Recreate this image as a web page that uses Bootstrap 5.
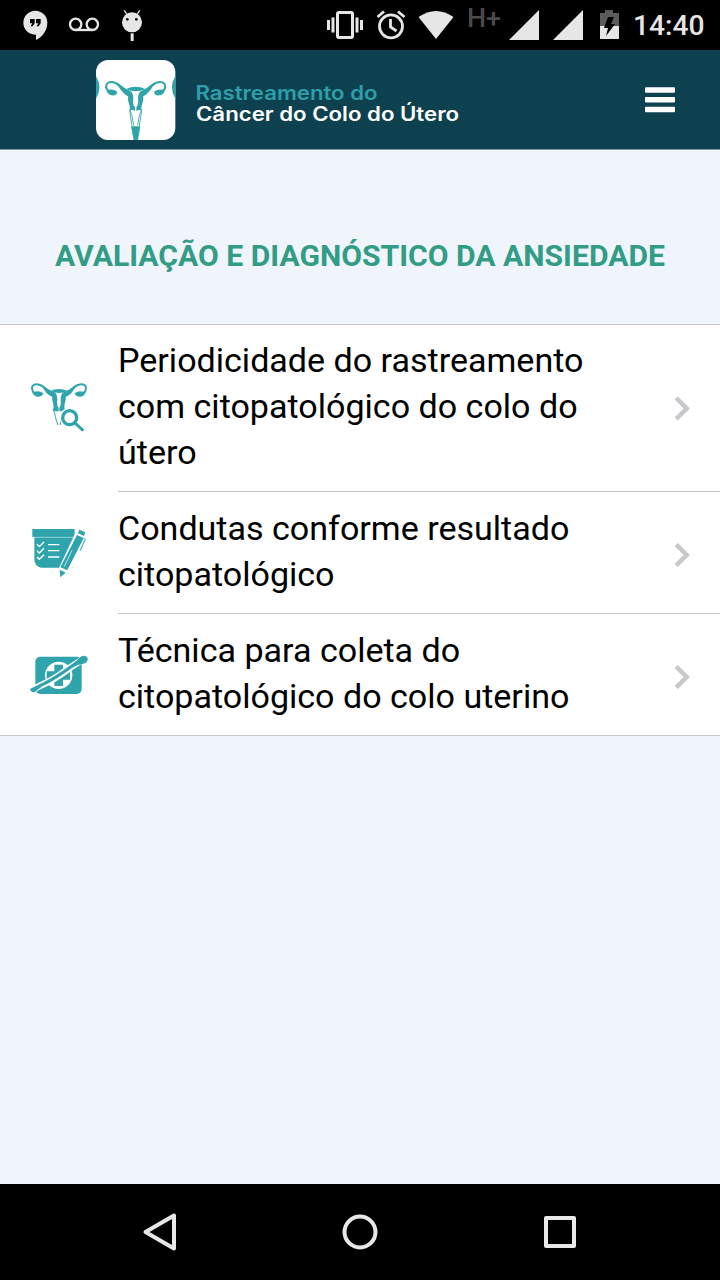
<!DOCTYPE html>
<html lang="pt-BR">
<head>
<meta charset="utf-8">
<meta name="viewport" content="width=device-width, initial-scale=1">
<title>Rastreamento do Câncer do Colo do Útero</title>
<link href="https://cdn.jsdelivr.net/npm/bootstrap@5.3.0/dist/css/bootstrap.min.css" rel="stylesheet">
<style>
body{font-family:Roboto,"Liberation Sans",sans-serif;background:#eff4fd;color:#000;height:1280px;overflow:hidden}
svg{display:block;flex:none}
.status-bar{height:50px;background:#000;color:#e6e6e6}
.clock{font-size:28.2px;line-height:50px;width:71px;margin-right:16px;padding-top:1px;white-space:nowrap;font-weight:500}
.app-bar{height:100px;background:#0d414f;border-bottom:1px solid #7f9ba8;padding:10px 45px 0 96px}
.screen-title{height:174px;padding-top:84px;font-size:30.15px;line-height:44px;font-weight:700;color:#329c85;white-space:nowrap}
.topics{border-top:1px solid #c4c7cc;border-bottom:1px solid #c4c7cc;border-radius:0;background:#fff}
.topic{padding:0 0 0 20px;border:0;background:#fff;color:#000;font-size:34.05px;line-height:46px}
.topic-body{margin-left:18px;height:122px;border-bottom:1px solid #c4c7cc;padding:0 28px 0 0}
.topic-body.tall{height:167px}
.topic:last-child .topic-body{border-bottom:0;height:121px}
.label-text{width:500px;white-space:nowrap;padding-bottom:3px}
.tall .label-text{padding-bottom:4px}
.nav-keys{height:96px;background:#000}
</style>
</head>
<body class="d-flex flex-column">
<div class="status-bar d-flex justify-content-between flex-shrink-0">
  <svg width="180" height="50" viewBox="0 0 540 150" fill="#e6e6e6">
    <path d="M106 32a36 36 0 0 0-36 36c0 20 16 36 38 36v16c18-9 34-28 34-52a36 36 0 0 0-36-36z"/>
    <path fill="#000" d="M90 57h14v13l-6 9h-6l5-9h-7zM108 57h14v13l-6 9h-6l5-9h-7z"/>
    <g fill="none" stroke="#e6e6e6" stroke-width="7"><circle cx="227" cy="73" r="17"/><circle cx="277" cy="73" r="17"/><path d="M227 90h50"/><path d="M373 31l9 14M419 31l-9 14" stroke-width="4"/></g>
    <circle cx="396" cy="67" r="30"/><rect x="392" y="100" width="9" height="23"/>
    <g fill="#000"><circle cx="382" cy="58" r="4"/><circle cx="409" cy="58" r="4"/></g>
  </svg>
  <div class="d-flex">
    <svg width="313" height="50" viewBox="320 0 313 50" fill="#e6e6e6">
      <rect x="337.500" y="12.500" width="15" height="25" rx="1.500" fill="none" stroke="#e6e6e6" stroke-width="3"/>
      <path d="M327 20h3v10h-3zM331.500 17.500h3v15h-3zM355.500 17.500h3v15h-3zM360 20h3v10h-3z"/>
      <g fill="none" stroke="#e6e6e6" stroke-width="2.800"><circle cx="391" cy="26.300" r="11.500"/><path d="M390.500 19v8l6 4M377.500 17l6.500-5.500M404.500 17l-6.500-5.500"/></g>
      <path d="M418.500 17Q436 5 453.500 17L436 39z"/>
      <text x="467" y="27" font-size="25" font-weight="500" fill="#4a4a4a" textLength="34" lengthAdjust="spacingAndGlyphs">H+</text>
      <path d="M509 40l30-30v30zM553 40l30-30v30z"/>
      <path fill="#5b5b5b" d="M600 13h5v-3h8v3h6v13h-19z"/><path d="M600 26h19v13h-19z"/>
      <path fill="#000" d="M608 17h6l-3 7h4l-9 12 2-8h-4z"/>
    </svg>
    <div class="clock">14:40</div>
  </div>
</div>

<header class="app-bar d-flex justify-content-between flex-shrink-0">
  <div class="d-flex">
    <svg width="80" height="80" viewBox="33 30 240 240">
      <rect x="33" y="30" width="238" height="240" rx="36" fill="#fff"/>
      <g fill="#2fa4a9">
        <path d="M33 78Q54 112 33 146zM271 78Q250 112 271 146z"/>
        <path d="M123 117Q152 103 181 117Q152 131 123 117z"/>
        <path d="M138 229h28l-7 41h-13z"/>
        <g id="tube">
          <path d="M65 118C56 92 86 91 101 106C112 116 122 123 136 128" fill="none" stroke="#2fa4a9" stroke-width="6"/>
          <path d="M96 97Q118 116 139 125C152 140 137 158 150 172V183L141 179L133 184C139 164 125 154 130 140C118 132 104 122 96 97z"/>
          <path d="M63 113L72 119Q86 117 97 125Q95 138 81 136Q65 135 63 113z"/>
        </g>
        <use href="#tube" transform="matrix(-1 0 0 1 304 0)"/>
      </g>
      <path d="M134 180C143 194 142 208 146 226M170 180C161 194 162 208 158 226M134 182L141 228M170 182L163 228" fill="none" stroke="#2fa4a9" stroke-width="2.500"/>
    </svg>
    <svg class="ms-3" width="280" height="80" viewBox="191 60 280 80" font-family="Inter,sans-serif" font-weight="600" font-size="19.500">
      <text x="194.500" y="99.500" fill="#2d9faa" textLength="182" lengthAdjust="spacingAndGlyphs">Rastreamento do</text>
      <text x="195" y="120.500" fill="#fff" textLength="263" lengthAdjust="spacingAndGlyphs">Câncer do Colo do Útero</text>
    </svg>
  </div>
  <svg width="30" height="80" viewBox="645 60 30 80" fill="#fff"><rect x="645" y="87.300" width="30" height="5.500" rx="1"/><rect x="645" y="97" width="30" height="5.500" rx="1"/><rect x="645" y="106.700" width="30" height="5.500" rx="1"/></svg>
</header>

<main class="flex-grow-1">
  <h1 class="screen-title text-center m-0">AVALIAÇÃO E DIAGNÓSTICO DA ANSIEDADE</h1>
  <div class="list-group topics">
    <a href="#" class="list-group-item topic d-flex align-items-center">
      <svg width="80" height="70" viewBox="0 11 240 210">
        <g fill="#2fa4ad">
          <path d="M91 61Q117 51 143 61Q117 75 91 61z"/>
          <g id="tubeSmall">
            <path d="M38 62C28 38 56 37 71 51C81 60 91 67 103 71" fill="none" stroke="#2fa4ad" stroke-width="6"/>
            <path d="M66 42Q85 61 106 67C118 82 106 100 116 112V123H105L99 118C105 104 94 90 97 80C84 74 72 65 66 42z"/>
            <path d="M35 57L44 64Q59 60 70 69Q66 81 51 79Q36 77 35 57z"/>
          </g>
          <use href="#tubeSmall" transform="matrix(-1 0 0 1 234 0)"/>
        </g>
        <path d="M99 116C106 128 106 148 114 164M131 116C122 132 121 145 121 164" stroke="#2fa4ad" stroke-width="3" fill="none"/>
        <circle cx="149" cy="142" r="30" fill="#fff"/><circle cx="149" cy="142" r="21" fill="none" stroke="#2fa4ad" stroke-width="10"/><path d="M165 158L190 181" stroke="#2fa4ad" stroke-width="9"/>
      </svg>
      <div class="topic-body tall d-flex flex-grow-1 justify-content-between align-items-center">
        <div class="label-text">Periodicidade do rastreamento<br>com citopatológico do colo do<br>útero</div>
        <svg width="20" height="30" viewBox="-.7 0 20 30"><path d="M3.500 5l10.500 10.500L3.500 26" fill="none" stroke="#c7c7cc" stroke-width="4.500"/></svg>
      </div>
    </a>
    <a href="#" class="list-group-item topic d-flex align-items-center">
      <svg width="80" height="70" viewBox="1 9 240 210">
        <path fill="#2fa4ad" d="M38 42H165V66H160V158H64Q44 153 44 132V66H38z"/>
        <path d="M38 67H165" stroke="#fff" stroke-width="1.500"/>
        <path d="M85 89H119M85 107H119M85 126H119" stroke="#fff" stroke-width="4"/>
        <path d="M52 88l7 7 14-14M52 107l7 7 14-14M52 126l7 7 14-14" fill="none" stroke="#fff" stroke-width="4"/>
        <path d="M174 39L202 50L199 72L142 182L129 194H112L115 165z" fill="#fff"/>
        <path d="M140 158H160V115z" fill="#fff"/>
        <path d="M179 44L197 52L193 63L175 55zM172 60L192 69L143 166L122 157zM120 164L138 173L122 187z" fill="#2fa4ad"/>
        <path d="M194 69L197 73L181 108" fill="none" stroke="#2fa4ad" stroke-width="3"/><path d="M157 106L134 154" stroke="#fff" stroke-width="2"/>
      </svg>
      <div class="topic-body d-flex flex-grow-1 justify-content-between align-items-center">
        <div class="label-text">Condutas conforme resultado<br>citopatológico</div>
        <svg width="20" height="30" viewBox="-.7 -1.500 20 30"><path d="M3.500 5l10.500 10.500L3.500 26" fill="none" stroke="#c7c7cc" stroke-width="4.500"/></svg>
      </div>
    </a>
    <a href="#" class="list-group-item topic d-flex align-items-center">
      <svg width="80" height="70" viewBox="2 0 240 210">
        <rect x="48" y="50" width="139" height="112" rx="15" fill="#2fa4ad"/>
        <circle cx="118" cy="106" r="41" fill="#fff"/>
        <path d="M105 74h26v20h21v25h-21v19h-26v-19H82V94h23z" fill="#2fa4ad"/>
        <path d="M38 150L65 136Q105 119 155 81L193 56" stroke="#fff" stroke-width="20" fill="none" stroke-linecap="round"/>
        <path d="M32 147L62 132Q105 112 153 76Q170 65 183 51Q198 42 205 54Q207 68 192 71Q175 72 159 83Q112 118 69 139L46 156Q36 159 32 147z" fill="#2fa4ad"/>
      </svg>
      <div class="topic-body d-flex flex-grow-1 justify-content-between align-items-center">
        <div class="label-text">Técnica para coleta do<br>citopatológico do colo uterino</div>
        <svg width="20" height="30" viewBox="-.7 -1.500 20 30"><path d="M3.500 5l10.500 10.500L3.500 26" fill="none" stroke="#c7c7cc" stroke-width="4.500"/></svg>
      </div>
    </a>
  </div>
</main>

<nav class="nav-keys d-flex justify-content-center align-items-center flex-shrink-0">
  <svg width="480" height="64" viewBox="0 0 480 64" fill="none" stroke="#e8e8e8" stroke-width="4" stroke-linejoin="round"><path d="M25.500 32L54 15.500V48.500z"/><circle cx="240" cy="32" r="15.500"/><rect x="426" y="18" width="28" height="28"/></svg>
</nav>
<script src="https://cdn.jsdelivr.net/npm/bootstrap@5.3.0/dist/js/bootstrap.bundle.min.js"></script>
</body>
</html>
